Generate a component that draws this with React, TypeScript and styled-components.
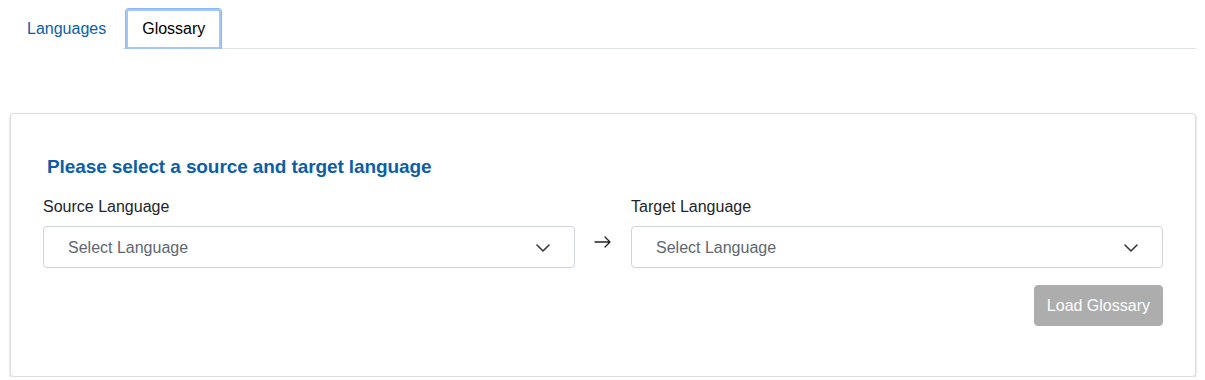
import * as React from "react";
import styled, { createGlobalStyle } from "styled-components";

const GlobalStyle = createGlobalStyle`
  body {
    margin: 0;
    background: #ffffff;
    font-family: "Liberation Sans", Arial, sans-serif;
    color: #212529;
  }
`;

const Page = styled.div`
  padding: 8px 9px 0 10px;
`;

const TabBar = styled.div`
  display: flex;
  gap: 2px;
  border-bottom: 1px solid #dee2e6;
`;

const Tab = styled.button<{ $active?: boolean }>`
  font-family: inherit;
  font-size: 16px;
  line-height: 24px;
  padding: 8px 16px;
  background: #fff;
  border: 1px solid ${(p) => (p.$active ? "#8ab8f5" : "transparent")};
  border-bottom: none;
  border-radius: 4px 4px 0 0;
  color: ${(p) => (p.$active ? "#000" : "#0b5ea8")};
  box-shadow: ${(p) => (p.$active ? "inset 0 0 0 2px #a3c7f7" : "none")};
  margin-bottom: -1px;
  cursor: pointer;
`;

const Card = styled.div`
  margin-top: 64px;
  border: 1px solid #dcdcdc;
  border-radius: 4px;
  box-shadow: 0 1px 2px rgba(0, 0, 0, 0.28);
  padding: 40px 32px 50px 32px;
`;

const Heading = styled.h2`
  margin: 0 0 16px 0;
  padding-left: 4px;
  font-size: 19px;
  line-height: 25px;
  font-weight: 700;
  letter-spacing: -0.1px;
  color: #0b5ea8;
`;

const Row = styled.div`
  display: grid;
  grid-template-columns: 1fr 56px 1fr;
  align-items: end;
`;

const Field = styled.div`
  display: flex;
  flex-direction: column;
`;

const Label = styled.label`
  font-size: 16px;
  line-height: 24px;
  margin-bottom: 7px;
`;

const Select = styled.div`
  height: 42px;
  box-sizing: border-box;
  border: 1px solid #ced4da;
  border-radius: 4px;
  display: flex;
  align-items: center;
  justify-content: space-between;
  padding: 1px 24px 0 24px;
  font-size: 16px;
  color: #5f6770;
  background: #fff;
`;

const ArrowCell = styled.div`
  height: 42px;
  display: flex;
  align-items: flex-start;
  justify-content: center;
  padding-top: 10px;
  box-sizing: border-box;
`;

const Actions = styled.div`
  display: flex;
  justify-content: flex-end;
  margin-top: 17px;
`;

const LoadButton = styled.button`
  font-family: inherit;
  font-size: 16px;
  height: 41px;
  padding: 0 12px;
  border: 1px solid #adadad;
  border-radius: 4px;
  background: #adadad;
  color: #fff;
`;

const Chevron = () => (
  <svg width="14" height="8" viewBox="0 0 14 8" fill="none">
    <path d="M1 1l6 6 6-6" stroke="#343a40" strokeWidth="1.6" strokeLinecap="round" strokeLinejoin="round" />
  </svg>
);

const Arrow = () => (
  <svg width="18" height="12" viewBox="0 0 18 12" fill="none">
    <path d="M1 6h15M11 1l5 5-5 5" stroke="#222" strokeWidth="1.3" strokeLinecap="round" strokeLinejoin="round" />
  </svg>
);

const LanguageSelect = ({ label }: { label: string }) => (
  <Field>
    <Label>{label}</Label>
    <Select>
      <span>Select Language</span>
      <Chevron />
    </Select>
  </Field>
);

export default function App() {
  return (
    <Page>
      <GlobalStyle />
      <TabBar>
        <Tab>Languages</Tab>
        <Tab $active>Glossary</Tab>
      </TabBar>
      <Card>
        <Heading>Please select a source and target language</Heading>
        <Row>
          <LanguageSelect label="Source Language" />
          <ArrowCell>
            <Arrow />
          </ArrowCell>
          <LanguageSelect label="Target Language" />
        </Row>
        <Actions>
          <LoadButton disabled>Load Glossary</LoadButton>
        </Actions>
      </Card>
    </Page>
  );
}
